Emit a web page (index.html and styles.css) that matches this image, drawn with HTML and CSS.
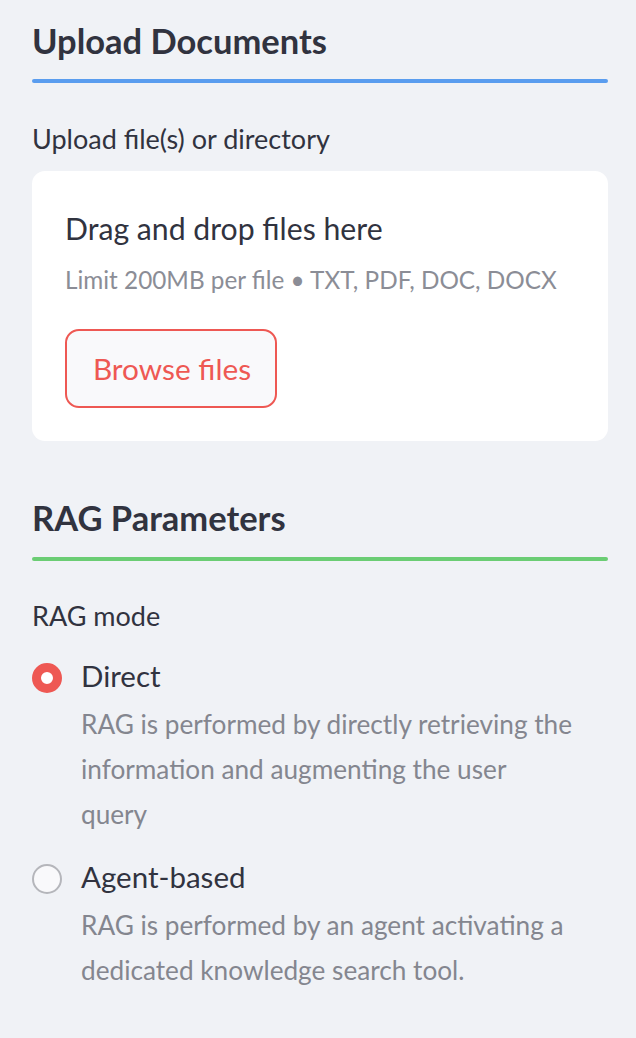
FILE: index.html
```html
<!DOCTYPE html>
<html lang="en">
<head>
<meta charset="utf-8">
<title>Sidebar</title>
<link rel="stylesheet" href="styles.css">
</head>
<body>
<div class="sidebar">
  <h3 class="title">Upload Documents</h3>
  <div class="rule rule-blue"></div>

  <div class="label label-upload">Upload file(s) or directory</div>
  <div class="dropzone">
    <div class="dz-title">Drag and drop files here</div>
    <div class="dz-sub">Limit 200MB per file • TXT, PDF, DOC, DOCX</div>
    <button class="browse" type="button">Browse files</button>
  </div>

  <h3 class="title title-rag">RAG Parameters</h3>
  <div class="rule rule-green"></div>

  <div class="label label-mode">RAG mode</div>

  <div class="radio radio-first">
    <span class="dot dot-on"></span>
    <span class="radio-text">Direct</span>
  </div>
  <div class="help help-first">RAG is performed by directly retrieving the information and augmenting the user query</div>

  <div class="radio radio-second">
    <span class="dot dot-off"></span>
    <span class="radio-text">Agent-based</span>
  </div>
  <div class="help help-second">RAG is performed by an agent activating a dedicated knowledge search tool.</div>
</div>
</body>
</html>
```

FILE: styles.css
```css
* { box-sizing: border-box; }

html, body {
  margin: 0;
  padding: 0;
  background: #f0f2f6;
}

body {
  font-family: "Source Sans Pro", Lato, "Noto Sans", sans-serif;
  color: #31333f;
  width: 636px;
  height: 1038px;
  overflow: hidden;
}

.sidebar {
  display: flex;
  flex-direction: column;
  padding: 0 28px 0 32px;
}

.title {
  margin: 19px 0 0 0;
  font-size: 34.5px;
  font-weight: 700;
  line-height: 44px;
  color: #31333f;
}

.title-rag { margin-top: 55px; }

.rule {
  height: 4px;
  border-radius: 2px;
  margin-top: 16px;
}
.rule-blue { background: #5a9def; }
.rule-green { background: #6bcd74; margin-top: 17px; }

.label {
  font-size: 27px;
  line-height: 34px;
  color: #31333f;
}
.label-upload { margin-top: 39px; }
.label-mode { margin-top: 38px; }

.dropzone {
  margin-top: 15px;
  background: #ffffff;
  border-radius: 13px;
  padding: 37px 33px 33px 33px;
  display: flex;
  flex-direction: column;
  align-items: flex-start;
}

.dz-title {
  font-size: 30.2px;
  line-height: 40px;
  color: #31333f;
}

.dz-sub {
  margin-top: 15px;
  font-size: 24.3px;
  line-height: 34px;
  color: #8b8d96;
}

.browse {
  margin-top: 32px;
  height: 79px;
  width: 212px;
  border: 2px solid #ee5853;
  border-radius: 14px;
  background: #f9f9fb;
  color: #ee5853;
  font-family: inherit;
  font-size: 29.8px;
  padding: 0 0 0 2px;
}

.radio {
  display: flex;
  align-items: flex-start;
  gap: 19px;
}
.radio-first { margin-top: 23px; }
.radio-second { margin-top: 20px; }

.radio-text {
  font-size: 29.5px;
  line-height: 40px;
  color: #31333f;
}

.dot {
  flex: none;
  width: 30px;
  height: 30px;
  border-radius: 50%;
  margin-top: 7px;
}
.dot-on {
  background: #ffffff;
  border: 9.5px solid #ee5853;
}
.dot-off {
  background: #f9f9fb;
  border: 2px solid #b5b6bb;
}

.help {
  margin-left: 49px;
  max-width: 494.5px;
  font-size: 26.2px;
  line-height: 45px;
  color: #84868f;
}
.help-first { margin-top: 6px; }
.help-second { margin-top: 6px; }
```
